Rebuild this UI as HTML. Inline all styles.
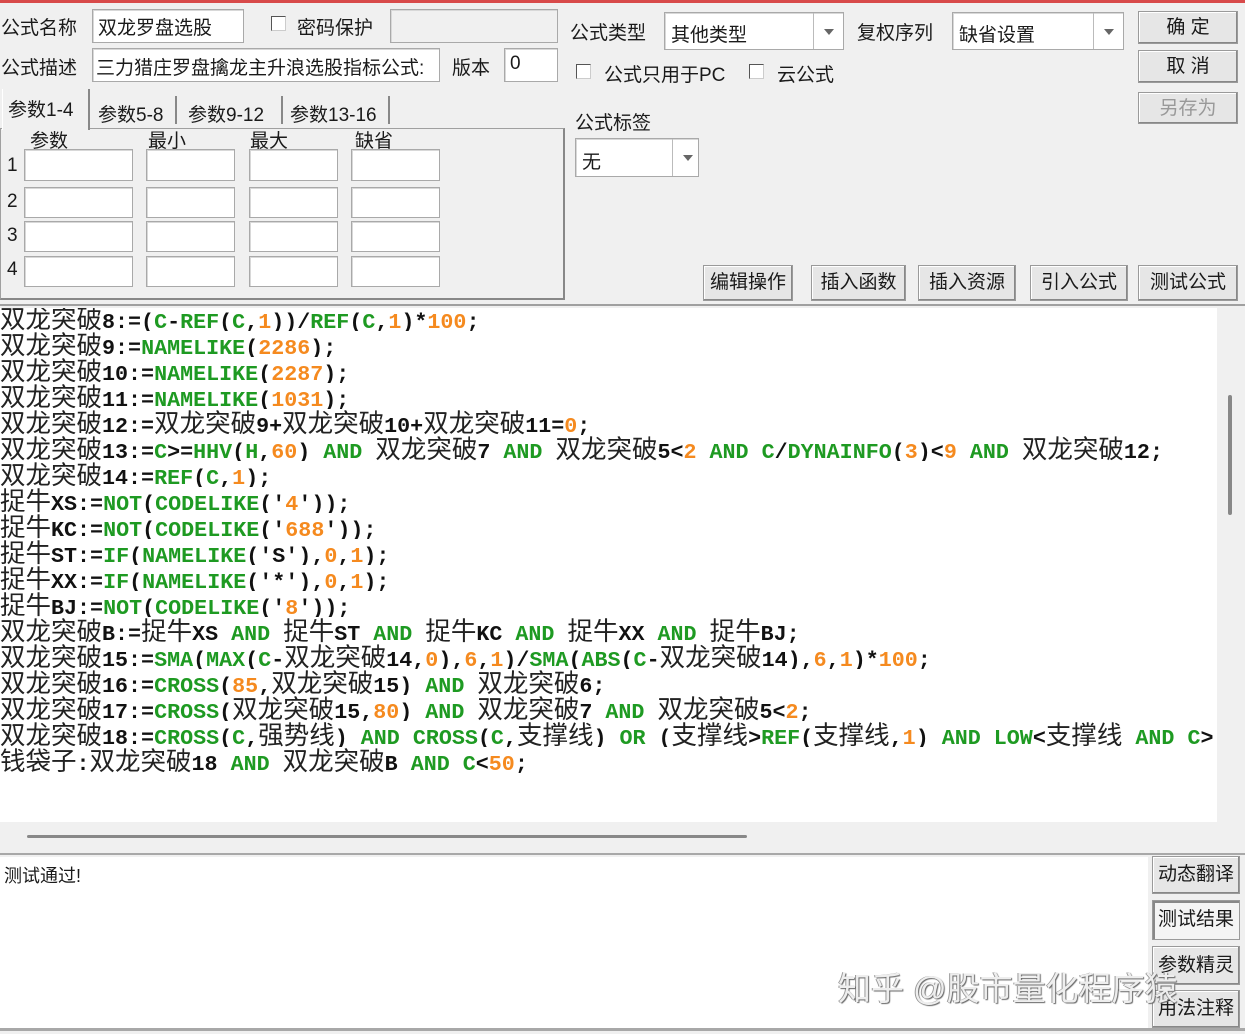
<!DOCTYPE html>
<html><head><meta charset="utf-8"><style>
*{margin:0;padding:0;box-sizing:border-box}
body{width:1245px;height:1034px;background:#f0f0f0;position:relative;overflow:hidden;font-family:"Liberation Sans","Noto Sans CJK SC",sans-serif;font-size:19px;color:#1a1a1a}
.a{position:absolute;white-space:nowrap}
.in{position:absolute;background:#fff;border:1px solid #a9a9a9;box-shadow:inset 1px 1px 0 #d8d8d8}
.cb{position:absolute;width:15px;height:15px;border:1px solid #555;border-right-color:#ccc;border-bottom-color:#ccc;background:#fff}
.btn{position:absolute;background:#e6e6e6;border:1px solid #9a9a9a;box-shadow:inset -1px -1px 0 #888,inset 1px 1px 0 #fff;text-align:center;font-size:19px;line-height:32px}
.combo .arr{position:absolute;right:0;top:0;bottom:0;width:30px;border-left:1px solid #bbb}
.combo .arr:after{content:"";position:absolute;left:10px;top:16px;border:5px solid transparent;border-top:6px solid #666}
.sep{position:absolute;top:96px;height:28px;border-right:2px solid #888}
#code{position:absolute;left:0;top:308px;width:1217px;height:514px;background:#fff;overflow:hidden}
#code .w{margin-top:-3px}
#code div div{height:26px;line-height:26px;white-space:pre;font-family:"Liberation Mono",monospace;font-weight:bold;font-size:21.7px;color:#111;overflow:hidden}
#code u{text-decoration:none;font-family:"Noto Sans CJK SC",sans-serif;font-weight:normal;font-size:25.5px;color:#222}
#code b{color:#1e9a22}
#code i{font-style:normal;color:#f58a1f}
</style></head><body>
<div class="a" style="left:0;top:0;width:1245px;height:3px;background:#d84a4a"></div>

<div class="a" style="left:1px;top:13px">公式名称</div>
<div class="in" style="left:92px;top:9px;width:152px;height:34px"></div>
<div class="a" style="left:98px;top:13px">双龙罗盘选股</div>
<div class="cb" style="left:271px;top:16px"></div>
<div class="a" style="left:297px;top:13px">密码保护</div>
<div class="in" style="left:390px;top:9px;width:168px;height:34px;background:#f0f0f0"></div>

<div class="a" style="left:1px;top:53px">公式描述</div>
<div class="in" style="left:92px;top:48px;width:348px;height:34px;overflow:hidden"></div>
<div class="a" style="left:96px;top:53px;width:340px;overflow:hidden">三力猎庄罗盘擒龙主升浪选股指标公式:</div>
<div class="a" style="left:452px;top:53px">版本</div>
<div class="in" style="left:504px;top:48px;width:54px;height:34px"></div>
<div class="a" style="left:510px;top:53px">0</div>

<div class="a" style="left:0;top:128px;width:565px;height:172px;border:1px solid #a0a0a0;border-right:2px solid #888;border-bottom:2px solid #888"></div>
<div class="a" style="left:2px;top:89px;width:88px;height:41px;background:#f0f0f0;border-left:1px solid #fff;border-right:2px solid #888"></div>
<div class="a" style="left:8px;top:95px">参数1-4</div>
<div class="a" style="left:98px;top:100px">参数5-8</div>
<div class="sep" style="left:175px"></div>
<div class="a" style="left:188px;top:100px">参数9-12</div>
<div class="sep" style="left:281px"></div>
<div class="a" style="left:290px;top:100px">参数13-16</div>
<div class="sep" style="left:388px"></div>
<div class="a" style="left:30px;top:126px">参数</div>
<div class="a" style="left:148px;top:126px">最小</div>
<div class="a" style="left:250px;top:126px">最大</div>
<div class="a" style="left:355px;top:126px">缺省</div>
<div class="a" style="left:7px;top:155px">1</div><div class="a" style="left:7px;top:191px">2</div><div class="a" style="left:7px;top:225px">3</div><div class="a" style="left:7px;top:259px">4</div>
<div class="in" style="left:24px;top:149px;width:109px;height:32px"></div><div class="in" style="left:146px;top:149px;width:89px;height:32px"></div><div class="in" style="left:249px;top:149px;width:89px;height:32px"></div><div class="in" style="left:351px;top:149px;width:89px;height:32px"></div>
<div class="in" style="left:24px;top:187px;width:109px;height:31px"></div><div class="in" style="left:146px;top:187px;width:89px;height:31px"></div><div class="in" style="left:249px;top:187px;width:89px;height:31px"></div><div class="in" style="left:351px;top:187px;width:89px;height:31px"></div>
<div class="in" style="left:24px;top:221px;width:109px;height:31px"></div><div class="in" style="left:146px;top:221px;width:89px;height:31px"></div><div class="in" style="left:249px;top:221px;width:89px;height:31px"></div><div class="in" style="left:351px;top:221px;width:89px;height:31px"></div>
<div class="in" style="left:24px;top:256px;width:109px;height:31px"></div><div class="in" style="left:146px;top:256px;width:89px;height:31px"></div><div class="in" style="left:249px;top:256px;width:89px;height:31px"></div><div class="in" style="left:351px;top:256px;width:89px;height:31px"></div>

<div class="a" style="left:570px;top:18px">公式类型</div>
<div class="in combo" style="left:664px;top:12px;width:180px;height:38px"><span class="a" style="left:6px;top:7px">其他类型</span><div class="arr"></div></div>
<div class="a" style="left:857px;top:18px">复权序列</div>
<div class="in combo" style="left:952px;top:12px;width:172px;height:38px"><span class="a" style="left:6px;top:7px">缺省设置</span><div class="arr"></div></div>
<div class="btn" style="left:1138px;top:11px;width:100px;height:33px">确 定</div>
<div class="btn" style="left:1138px;top:50px;width:100px;height:33px">取 消</div>
<div class="btn" style="left:1138px;top:92px;width:100px;height:32px;color:#999">另存为</div>
<div class="cb" style="left:576px;top:64px"></div>
<div class="a" style="left:604px;top:60px">公式只用于PC</div>
<div class="cb" style="left:749px;top:64px"></div>
<div class="a" style="left:777px;top:60px">云公式</div>
<div class="a" style="left:575px;top:108px">公式标签</div>
<div class="in combo" style="left:575px;top:138px;width:124px;height:39px"><span class="a" style="left:6px;top:8px">无</span><div class="arr" style="width:26px"></div></div>
<div class="btn" style="left:703px;top:265px;width:90px;height:36px;line-height:34px">编辑操作</div>
<div class="btn" style="left:811px;top:265px;width:95px;height:36px;line-height:34px">插入函数</div>
<div class="btn" style="left:918px;top:265px;width:98px;height:36px;line-height:34px">插入资源</div>
<div class="btn" style="left:1030px;top:265px;width:98px;height:36px;line-height:34px">引入公式</div>
<div class="btn" style="left:1138px;top:265px;width:100px;height:36px;line-height:34px">测试公式</div>
<div class="a" style="left:0;top:304px;width:1245px;height:2px;background:#a0a0a0"></div>

<div id="code"><div class="w">
<div><u>双龙突破</u>8:=(<b>C</b>-<b>REF</b>(<b>C</b>,<i>1</i>))/<b>REF</b>(<b>C</b>,<i>1</i>)*<i>100</i>;</div>
<div><u>双龙突破</u>9:=<b>NAMELIKE</b>(<i>2286</i>);</div>
<div><u>双龙突破</u>10:=<b>NAMELIKE</b>(<i>2287</i>);</div>
<div><u>双龙突破</u>11:=<b>NAMELIKE</b>(<i>1031</i>);</div>
<div><u>双龙突破</u>12:=<u>双龙突破</u>9+<u>双龙突破</u>10+<u>双龙突破</u>11=<i>0</i>;</div>
<div><u>双龙突破</u>13:=<b>C</b>&gt;=<b>HHV</b>(<b>H</b>,<i>60</i>) <b>AND</b> <u>双龙突破</u>7 <b>AND</b> <u>双龙突破</u>5&lt;<i>2</i> <b>AND</b> <b>C</b>/<b>DYNAINFO</b>(<i>3</i>)&lt;<i>9</i> <b>AND</b> <u>双龙突破</u>12;</div>
<div><u>双龙突破</u>14:=<b>REF</b>(<b>C</b>,<i>1</i>);</div>
<div><u>捉牛</u>XS:=<b>NOT</b>(<b>CODELIKE</b>('<i>4</i>'));</div>
<div><u>捉牛</u>KC:=<b>NOT</b>(<b>CODELIKE</b>('<i>688</i>'));</div>
<div><u>捉牛</u>ST:=<b>IF</b>(<b>NAMELIKE</b>('S'),<i>0</i>,<i>1</i>);</div>
<div><u>捉牛</u>XX:=<b>IF</b>(<b>NAMELIKE</b>('*'),<i>0</i>,<i>1</i>);</div>
<div><u>捉牛</u>BJ:=<b>NOT</b>(<b>CODELIKE</b>('<i>8</i>'));</div>
<div><u>双龙突破</u>B:=<u>捉牛</u>XS <b>AND</b> <u>捉牛</u>ST <b>AND</b> <u>捉牛</u>KC <b>AND</b> <u>捉牛</u>XX <b>AND</b> <u>捉牛</u>BJ;</div>
<div><u>双龙突破</u>15:=<b>SMA</b>(<b>MAX</b>(<b>C</b>-<u>双龙突破</u>14,<i>0</i>),<i>6</i>,<i>1</i>)/<b>SMA</b>(<b>ABS</b>(<b>C</b>-<u>双龙突破</u>14),<i>6</i>,<i>1</i>)*<i>100</i>;</div>
<div><u>双龙突破</u>16:=<b>CROSS</b>(<i>85</i>,<u>双龙突破</u>15) <b>AND</b> <u>双龙突破</u>6;</div>
<div><u>双龙突破</u>17:=<b>CROSS</b>(<u>双龙突破</u>15,<i>80</i>) <b>AND</b> <u>双龙突破</u>7 <b>AND</b> <u>双龙突破</u>5&lt;<i>2</i>;</div>
<div><u>双龙突破</u>18:=<b>CROSS</b>(<b>C</b>,<u>强势线</u>) <b>AND</b> <b>CROSS</b>(<b>C</b>,<u>支撑线</u>) <b>OR</b> (<u>支撑线</u>&gt;<b>REF</b>(<u>支撑线</u>,<i>1</i>) <b>AND</b> <b>LOW</b>&lt;<u>支撑线</u> <b>AND</b> <b>C</b>&gt;</div>
<div><u>钱袋子</u>:<u>双龙突破</u>18 <b>AND</b> <u>双龙突破</u>B <b>AND</b> <b>C</b>&lt;<i>50</i>;</div>
</div></div>
<div class="a" style="left:1217px;top:308px;width:28px;height:514px;background:#f0f0f0"></div>
<div class="a" style="left:1228px;top:395px;width:4px;height:120px;background:#888;border-radius:2px"></div>
<div class="a" style="left:0;top:822px;width:1245px;height:32px;background:#f0f0f0"></div>
<div class="a" style="left:27px;top:835px;width:720px;height:3px;background:#888;border-radius:2px"></div>
<div class="a" style="left:0;top:853px;width:1245px;height:2px;background:#a8a8a8"></div>

<div class="a" style="left:0;top:857px;width:1148px;height:171px;background:#fff"></div>
<div class="a" style="left:4px;top:862px;font-size:18px">测试通过!</div>
<div class="btn" style="left:1152px;top:856px;width:88px;height:38px;line-height:36px">动态翻译</div>
<div class="btn" style="left:1152px;top:900px;width:88px;height:40px;line-height:38px;box-shadow:inset 2px 2px 0 #888;background:#f4f4f4">测试结果</div>
<div class="btn" style="left:1152px;top:946px;width:88px;height:39px;line-height:37px">参数精灵</div>
<div class="btn" style="left:1152px;top:990px;width:88px;height:38px;line-height:36px">用法注释</div>
<div class="a" style="left:0;top:1028px;width:1245px;height:3px;background:#a8a8a8"></div>
<div class="a" style="left:838px;top:962px;font-size:33px;color:#eee;text-shadow:1px 1px 1px #666,-1px 0 0 #999">知乎 @股市量化程序猿</div>
</body></html>
